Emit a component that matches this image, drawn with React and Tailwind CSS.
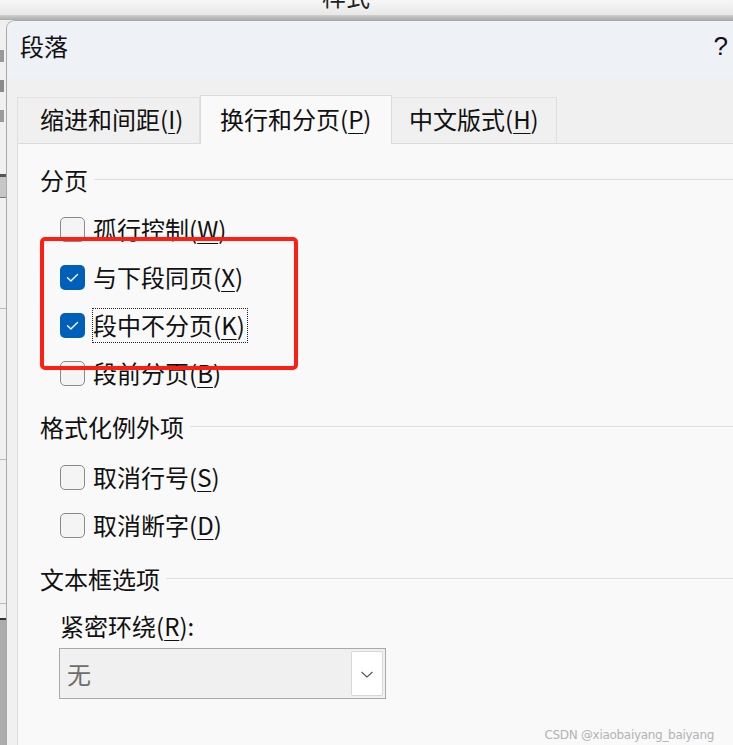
import React from "react";

function Box({ checked }) {
  if (checked) {
    return (
      <div className="w-[25px] h-[25px] rounded-[5px] bg-[#005fb8] flex items-center justify-center shrink-0">
        <svg width="25" height="25" viewBox="0 0 25 25">
          <path d="M7.5 12.8 L10.9 16 L17.5 9.6" fill="none" stroke="#ffffff" strokeWidth="1.4" strokeLinecap="round" strokeLinejoin="round" />
        </svg>
      </div>
    );
  }
  return <div className="w-[25px] h-[25px] rounded-[5px] border border-[#8a8a8a] bg-[#f4f4f4] shrink-0" />;
}

function Row({ checked, label, k, focus }) {
  return (
    <div className="h-[48px] flex items-center pl-[20px] gap-[8px]">
      <Box checked={checked} />
      <span
        className={
          focus
            ? "border border-dotted border-[#222] h-[35px] flex items-center pr-[2px] -ml-[1px]"
            : "h-[35px] flex items-center"
        }
      >
        {label}(<span className="underline underline-offset-[4px] decoration-1">{k}</span>)
      </span>
    </div>
  );
}

function Header({ children }) {
  return (
    <div className="h-[32px] flex items-center gap-[6px]">
      <span>{children}</span>
      <div className="flex-1 h-px bg-[#dedede] -mt-[2px]" />
    </div>
  );
}

export default function App() {
  return (
    <div className="w-[733px] h-[745px] overflow-hidden relative bg-[#ececec] flex flex-col font-['Noto_Sans_CJK_SC','Noto_Sans',sans-serif] text-[24px] text-[#111]">
      {/* background window top strip */}
      <div className="h-[15px] shrink-0 bg-gradient-to-b from-[#f6f6f6] to-[#e8e8e8] overflow-hidden pl-[322px]">
        <div className="-mt-[19px] leading-[30px] text-[#222]">样式</div>
      </div>
      <div className="h-[5px] shrink-0 bg-gradient-to-b from-[#cfcfcf] to-[#ababab]" />

      <div className="flex-1 flex min-h-0">
        {/* left strip of background window */}
        <div className="w-[6px] shrink-0 flex flex-col bg-[#f0f0f0]">
          <div className="h-[26px]" />
          <div className="h-[90px] flex flex-col gap-[18px] pt-[4px]">
            <div className="w-[4px] h-[12px] bg-[#9a9a9a]" />
            <div className="w-[4px] h-[12px] bg-[#8a8a8a]" />
            <div className="w-[4px] h-[12px] bg-[#9a9a9a]" />
          </div>
          <div className="h-[38px]" />
          <div className="h-[3px] bg-[#555]" />
          <div className="h-[20px] bg-[#c6c6c6]" />
          <div className="h-px bg-[#777]" />
          <div className="h-[110px]" />
          <div className="h-px bg-[#bbb]" />
          <div className="h-[150px]" />
          <div className="h-px bg-[#bbb]" />
          <div className="h-[143px]" />
          <div className="h-px bg-[#bbb]" />
          <div className="h-[14px]" />
          <div className="h-[2px] bg-[#333]" />
          <div className="flex-1 bg-[#acacac]" />
        </div>

        {/* dialog */}
        <div className="flex-1 flex flex-col rounded-tl-[9px] border-l border-t border-[#a9a9a9] overflow-hidden">
          <div className="h-[57px] shrink-0 bg-[#eef2f7] flex items-center justify-between pl-[13px] pr-[5px]">
            <span className="text-[24px] leading-none -mt-[8px]">段落</span>
            <span className="leading-none -mt-[8px] font-['Liberation_Sans',sans-serif] text-[26px]">?</span>
          </div>
          <div className="flex-1 bg-[#f0f0f0] pl-[10px] pt-[16px] flex flex-col min-h-0">
            {/* tabs */}
            <div className="flex items-end h-[49px] shrink-0 relative z-10">
              <div className="w-[183px] h-[46px] border border-b-0 border-[#e0e0e0] bg-[#f0f0f0] flex items-center pl-[22px] pb-[3px]">
                缩进和间距(<span className="underline underline-offset-[4px] decoration-1">I</span>)
              </div>
              <div className="w-[192px] h-[49px] border border-b-0 border-[#dcdcdc] bg-[#f9f9f9] flex items-center pl-[19px] pb-[3px] -mb-px">
                换行和分页(<span className="underline underline-offset-[4px] decoration-1">P</span>)
              </div>
              <div className="w-[165px] h-[46px] border border-b-0 border-l-0 border-[#e0e0e0] bg-[#f0f0f0] flex items-center pl-[17px] pb-[3px]">
                中文版式(<span className="underline underline-offset-[4px] decoration-1">H</span>)
              </div>
            </div>
            {/* panel */}
            <div className="flex-1 bg-[#f9f9f9] border-l border-t border-[#dcdcdc] pl-[22px] pt-[20px] relative flex flex-col">
              <Header>分页</Header>
              <div className="h-[9px]" />
              <Row label="孤行控制" k="W" />
              <Row checked label="与下段同页" k="X" />
              <Row checked label="段中不分页" k="K" focus />
              <Row label="段前分页" k="B" />
              <div className="h-[14px]" />
              <Header>格式化例外项</Header>
              <div className="h-[10px]" />
              <Row label="取消行号" k="S" />
              <Row label="取消断字" k="D" />
              <div className="h-[14px]" />
              <Header>文本框选项</Header>
              <div className="h-[15px]" />
              <div className="h-[32px] flex items-center pl-[20px]">
                紧密环绕(<span className="underline underline-offset-[4px] decoration-1">R</span>):
              </div>
              <div className="h-[6px]" />
              <div className="ml-[19px] w-[327px] h-[51px] bg-[#f0f0f0] border border-[#a9a9a9] flex items-center justify-between pl-[7px] pr-[2px]">
                <span className="text-[#6d6d6d]">无</span>
                <div className="w-[32px] h-[45px] bg-white border border-[#d8d8d8] rounded-[2px] flex items-center justify-center">
                  <svg width="14" height="10" viewBox="0 0 14 10">
                    <path d="M1.5 3 L7 8 L12.5 3" fill="none" stroke="#555" strokeWidth="1.1" />
                  </svg>
                </div>
              </div>

              {/* red annotation rectangle */}
              <div className="absolute left-[22px] top-[93px] w-[258px] h-[133px] border-[4px] border-[#ff1e12] rounded-[5px] pointer-events-none" />
            </div>
          </div>
        </div>
      </div>

      {/* watermark */}
      <div className="absolute right-[19px] bottom-[4px] text-[12px] leading-none text-[#b3b3b3] font-['DejaVu_Sans',sans-serif] tracking-[-0.3px]">
        CSDN @xiaobaiyang_baiyang
      </div>
    </div>
  );
}
